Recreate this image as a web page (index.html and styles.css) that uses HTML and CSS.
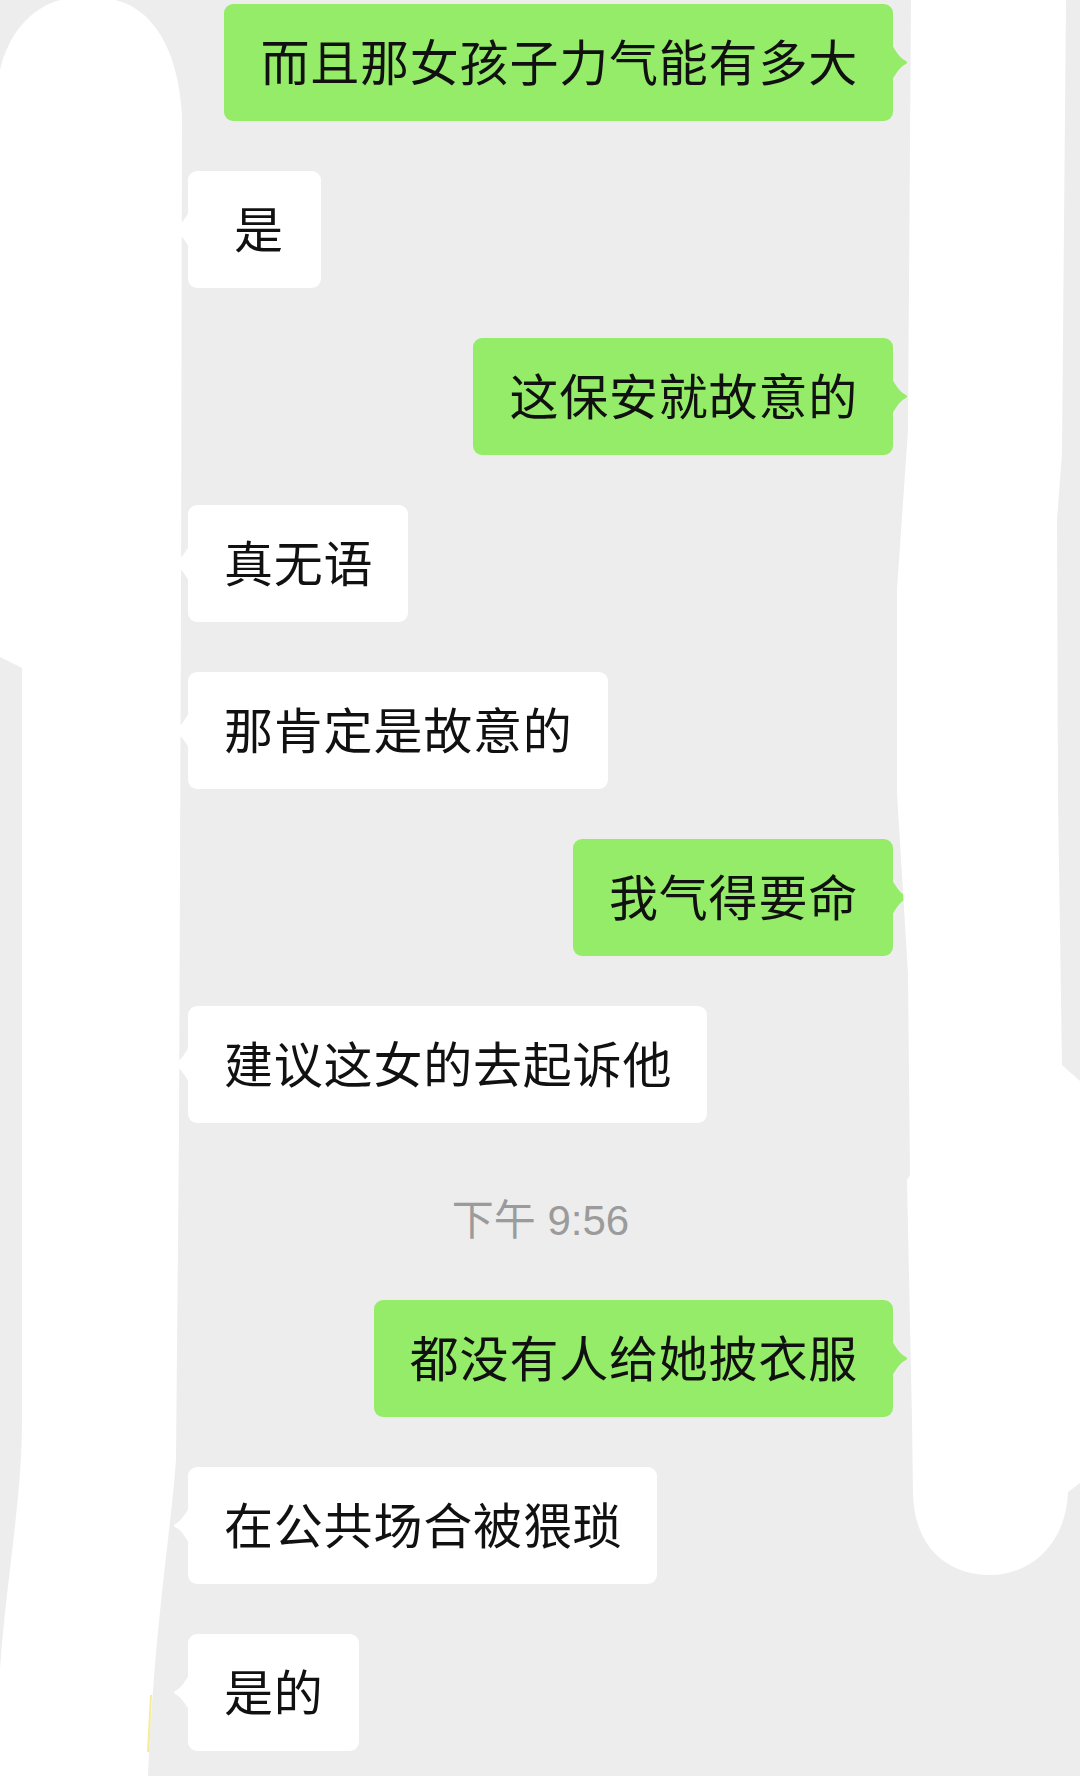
FILE: index.html
```html
<!DOCTYPE html>
<html lang="zh-CN">
<head>
<meta charset="utf-8">
<title>聊天记录</title>
<link rel="stylesheet" href="styles.css">
</head>
<body>
<div class="chat">
  <div class="row out"><div class="bubble green">而且那女孩子力气能有多大</div></div>
  <div class="row in"><div class="bubble white single">是</div></div>
  <div class="row out"><div class="bubble green">这保安就故意的</div></div>
  <div class="row in"><div class="bubble white">真无语</div></div>
  <div class="row in"><div class="bubble white">那肯定是故意的</div></div>
  <div class="row out"><div class="bubble green">我气得要命</div></div>
  <div class="row in"><div class="bubble white">建议这女的去起诉他</div></div>
  <div class="time">下午 9:56</div>
  <div class="row out"><div class="bubble green">都没有人给她披衣服</div></div>
  <div class="row in"><div class="bubble white">在公共场合被猥琐</div></div>
  <div class="row in"><div class="bubble white">是的</div></div>
</div>
<svg class="mask" width="1080" height="1776" viewBox="0 0 1080 1776" xmlns="http://www.w3.org/2000/svg" aria-hidden="true">
  <path fill="#ffffff" d="M0 70 C8 35 30 8 60 0 L115 0 C150 8 178 45 182 115 L181 600 L179 1130 L176 1460 C170 1540 155 1620 148 1776 L0 1776 L0 1670 C6 1580 22 1500 22 1420 L22 668 L0 657 Z"/>
  <path fill="none" stroke="#efe46a" stroke-width="2" stroke-opacity="0.7" d="M151 1695 L148 1752"/>
  <path fill="#ffffff" d="M911 0 L1066 0 L1062 453 L1057 520 L1058 800 L1062 1065 L1080 1081 L1080 1483 L1068 1492 C1066 1545 1030 1575 990 1575 C950 1575 915 1550 913 1495 L912 1420 L907 1180 L910 1175 L908 974 L897 793 L897 589 L908 430 Z"/>
</svg>
</body>
</html>
```

FILE: styles.css
```css
html, body {
  margin: 0;
  padding: 0;
}

body {
  width: 1080px;
  height: 1776px;
  overflow: hidden;
  position: relative;
  background: #ededed;
  font-family: "Noto Sans CJK SC", "Noto Sans", sans-serif;
  color: #111111;
}

.chat {
  display: flex;
  flex-direction: column;
  gap: 50px;
  padding: 4px 187px 0 188px;
}

.row {
  display: flex;
}

.row.out {
  justify-content: flex-end;
}

.row.in {
  justify-content: flex-start;
}

.bubble {
  position: relative;
  box-sizing: border-box;
  height: 117px;
  display: flex;
  align-items: center;
  padding: 0 35px 6px 36px;
  font-size: 49px;
  letter-spacing: 0.8px;
  line-height: 1;
  white-space: nowrap;
  border-radius: 9px;
}

.bubble.single {
  min-width: 133px;
  padding-left: 46px;
}

.green {
  background: #95ec69;
}

.white {
  background: #ffffff;
}

.bubble::after {
  content: "";
  position: absolute;
  top: 50%;
  width: 15px;
  height: 32px;
  margin-top: -16px;
}

.green::after {
  left: 100%;
  background: #95ec69;
  clip-path: path("M0 0 C4 7 8 12 13 14.5 Q15 16 13 17.5 C8 20 4 25 0 32 Z");
}

.white::after {
  right: 100%;
  background: #ffffff;
  clip-path: path("M15 0 C11 7 7 12 2 14.5 Q0 16 2 17.5 C7 20 11 25 15 32 Z");
}

.time {
  box-sizing: border-box;
  height: 77px;
  padding-top: 24px;
  line-height: 48px;
  text-align: center;
  font-family: "Liberation Sans", "Noto Sans CJK SC", sans-serif;
  font-size: 42px;
  color: #9b9b9b;
}

.mask {
  position: absolute;
  top: 0;
  left: 0;
  pointer-events: none;
}
```
